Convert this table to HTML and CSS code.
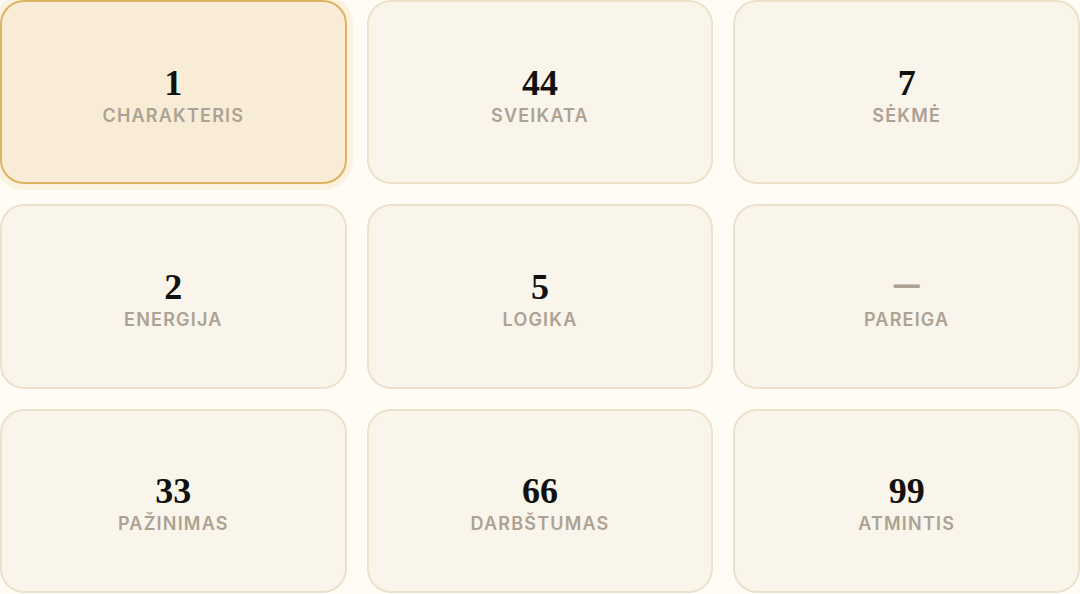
FILE: index.html
```html
<!DOCTYPE html>
<html lang="lt">
<head>
    <meta charset="UTF-8">
    <meta name="viewport" content="width=device-width, initial-scale=1.0">
    <title>Savybės</title>
    <link rel="stylesheet" href="styles.css">
</head>
<body>
    <div class="grid">
        <div class="card active">
            <div class="value">1</div>
            <div class="label">Charakteris</div>
        </div>
        <div class="card">
            <div class="value">44</div>
            <div class="label">Sveikata</div>
        </div>
        <div class="card">
            <div class="value">7</div>
            <div class="label">Sėkmė</div>
        </div>
        <div class="card">
            <div class="value">2</div>
            <div class="label">Energija</div>
        </div>
        <div class="card">
            <div class="value">5</div>
            <div class="label">Logika</div>
        </div>
        <div class="card">
            <div class="value empty">—</div>
            <div class="label">Pareiga</div>
        </div>
        <div class="card">
            <div class="value">33</div>
            <div class="label">Pažinimas</div>
        </div>
        <div class="card">
            <div class="value">66</div>
            <div class="label">Darbštumas</div>
        </div>
        <div class="card">
            <div class="value">99</div>
            <div class="label">Atmintis</div>
        </div>
    </div>
</body>
</html>
```

FILE: styles.css
```css
html, body {
    margin: 0;
    height: 100%;
}

body {
    background: #fffcf6;
    font-family: 'Inter', 'Noto Sans', sans-serif;
}

.grid {
    display: grid;
    grid-template-columns: repeat(3, 1fr);
    grid-template-rows: repeat(3, 1fr);
    gap: 20px;
    height: 100vh;
    box-sizing: border-box;
    padding-bottom: 1px;
}

.card {
    display: flex;
    flex-direction: column;
    justify-content: center;
    align-items: center;
    background: #faf5eb;
    border: 2px solid #ede1cb;
    border-radius: 24px;
    padding-top: 6px;
}

.card.active {
    background: #f8ecd6;
    border-color: #dcb460;
    box-shadow: 0 0 0 6px #fbf2df;
}

.value {
    font-family: 'Liberation Serif', 'DejaVu Serif', serif;
    font-weight: 700;
    font-size: 36px;
    line-height: 36px;
    color: #111;
}

.value.empty {
    font-family: 'DejaVu Sans', sans-serif;
    color: #aca293;
    font-size: 29px;
    line-height: 30px;
    margin-bottom: 6px;
}

.label {
    margin-top: 4px;
    font-size: 18px;
    font-weight: 600;
    letter-spacing: 1.2px;
    text-transform: uppercase;
    color: #aca293;
}
```
